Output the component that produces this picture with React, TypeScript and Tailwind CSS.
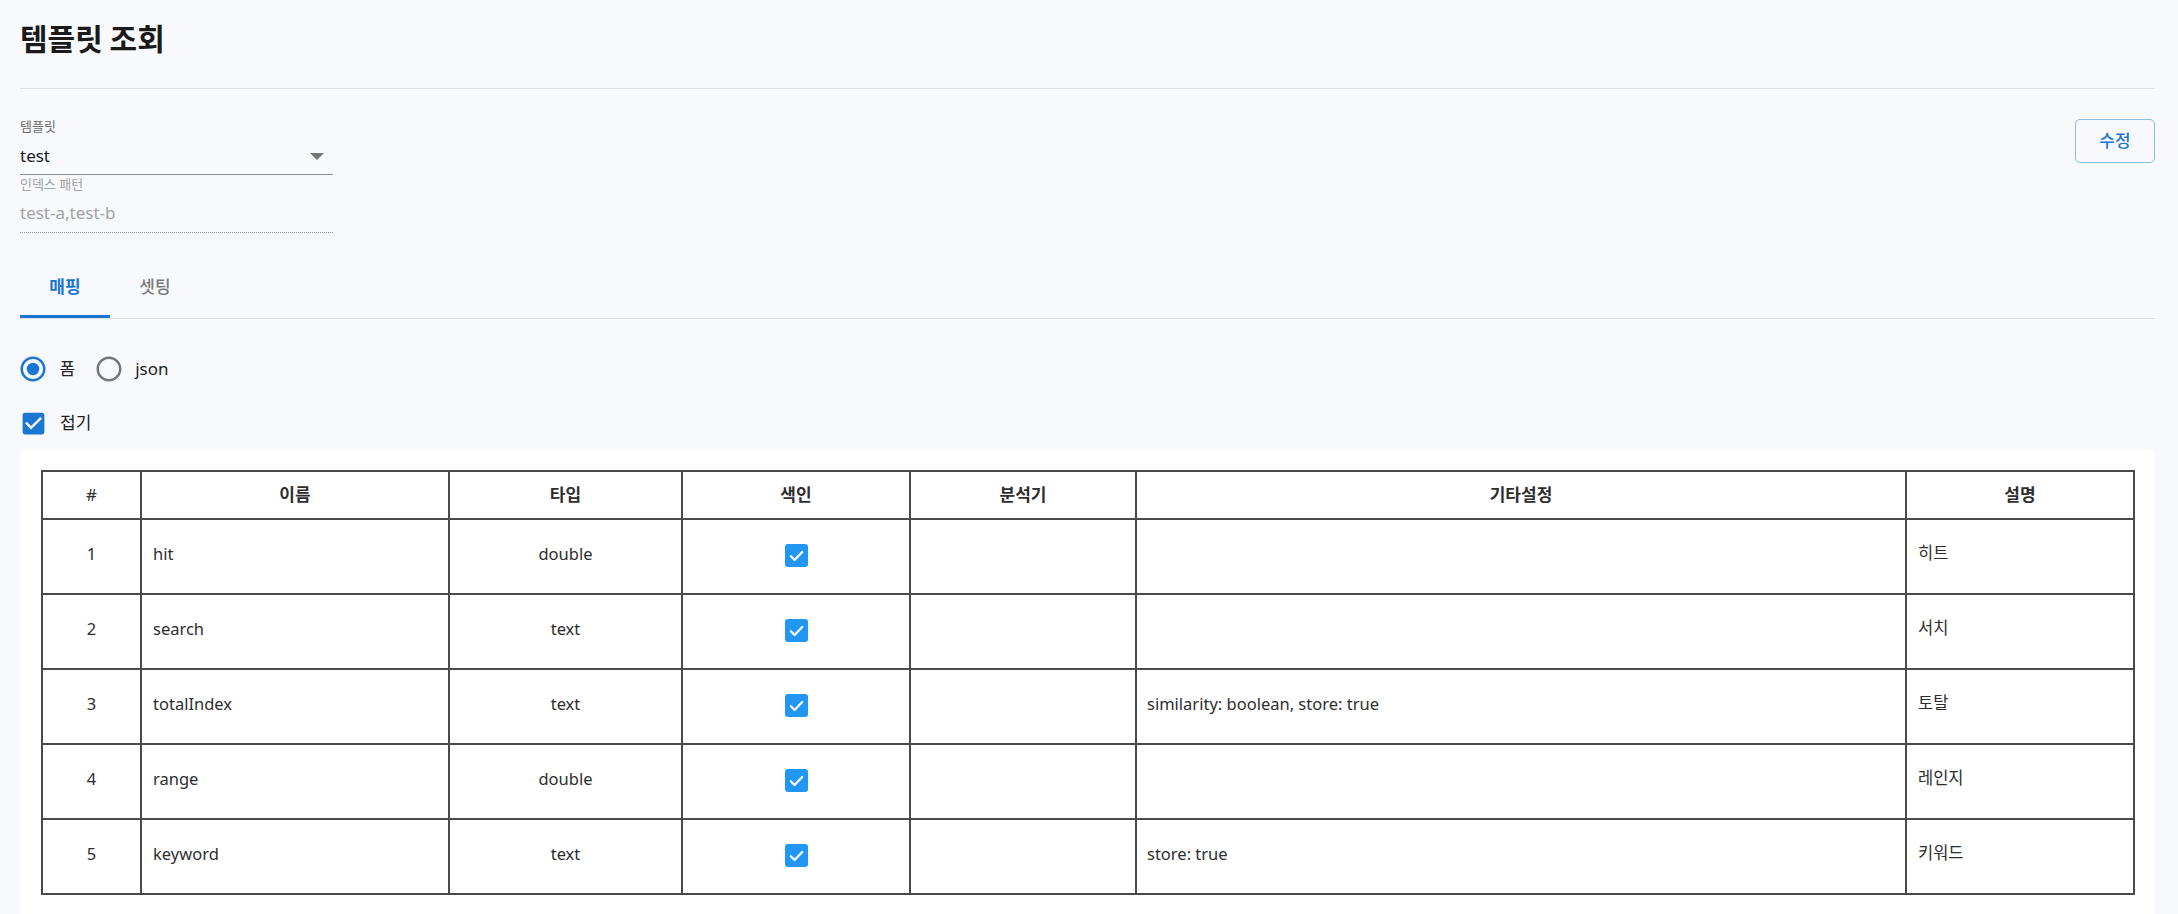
import React from "react";

const rows = [
  { n: 1, name: "hit", type: "double", etc: "", desc: "히트" },
  { n: 2, name: "search", type: "text", etc: "", desc: "서치" },
  { n: 3, name: "totalIndex", type: "text", etc: "similarity: boolean, store: true", desc: "토탈" },
  { n: 4, name: "range", type: "double", etc: "", desc: "레인지" },
  { n: 5, name: "keyword", type: "text", etc: "store: true", desc: "키워드" },
];

function TableCheck() {
  return (
    <div className="mx-auto flex h-[23px] w-[23px] items-center justify-center rounded-[3px] bg-[#2196f3]">
      <svg width="15" height="12" viewBox="0 0 15 12" fill="none">
        <path d="M1.8 6.2 L5.6 10 L13.2 2" stroke="#fff" strokeWidth="2.2" strokeLinecap="round" strokeLinejoin="round" />
      </svg>
    </div>
  );
}

export default function App() {
  const th = "border-2 border-[#4a4a4a] text-center text-[17px] font-bold h-[48px] p-0";
  const td = "border-2 border-[#4a4a4a] h-[75px] p-0 align-middle text-[16.5px]";
  return (
    <div className="min-h-screen bg-[#f7f9fc] pl-[20px] pr-[23px] font-['Noto_Sans','Noto_Sans_CJK_KR',sans-serif] text-[#212121]">
      {/* title */}
      <div className="h-[89px] border-b border-[#dfe0e2] pt-[17px]">
        <h1 className="font-['Noto_Sans_CJK_KR',sans-serif] text-[30px] font-bold leading-[40px] text-[#1a1a1a]">
          템플릿 조회
        </h1>
      </div>

      {/* form */}
      <div className="flex items-start justify-between pt-[29px]">
        <div className="w-[313px]">
          <div className="text-[13px] leading-[16px] text-[#6b6b6b]">템플릿</div>
          <div className="flex items-center justify-between border-b border-[#8f9093] pt-[10px] pb-[6px]">
            <span className="text-[17px] leading-[24px] text-[#1c1c1c]">test</span>
            <svg width="14" height="7" viewBox="0 0 14 7" className="mr-[9px]">
              <path d="M0 0 L14 0 L7 7 Z" fill="#757575" />
            </svg>
          </div>
          <div className="pt-[1px] text-[13px] leading-[16px] text-[#a3a3a3]">인덱스 패턴</div>
          <div className="border-b border-dotted border-[#8f9093] pt-[9px] pb-[7px]">
            <span className="text-[17px] leading-[24px] text-[#a3a3a3]">test-a,test-b</span>
          </div>
        </div>
        <button className="mt-[1px] h-[44px] w-[80px] rounded-[5px] border border-[#8dbbe9] text-[17px] font-medium text-[#1976d2]">
          수정
        </button>
      </div>

      {/* tabs */}
      <div className="mt-[25px] flex border-b border-[#dfe0e2]">
        <div className="flex h-[60px] w-[90px] flex-col">
          <div className="flex flex-1 items-center justify-center pt-[1px] text-[17px] font-semibold text-[#1976d2]">매핑</div>
          <div className="h-[3px] bg-[#1976d2]" />
        </div>
        <div className="flex h-[60px] w-[90px] flex-col">
          <div className="flex flex-1 items-center justify-center pt-[1px] text-[17px] font-medium text-[#7a7a7a]">셋팅</div>
          <div className="h-[3px]" />
        </div>
      </div>

      {/* radios */}
      <div className="mt-[35px] flex h-[30px] items-center">
        <svg width="30" height="30" viewBox="0 0 24 24" className="ml-[-2.5px]">
          <path
            fill="#1976d2"
            d="M12 2C6.48 2 2 6.48 2 12s4.48 10 10 10 10-4.48 10-10S17.52 2 12 2zm0 18c-4.42 0-8-3.58-8-8s3.58-8 8-8 8 3.58 8 8-3.58 8-8 8z"
          />
          <circle cx="12" cy="12" r="5" fill="#1976d2" />
        </svg>
        <span className="ml-[12px] text-[17px] text-[#222]">폼</span>
        <svg width="30" height="30" viewBox="0 0 24 24" className="ml-[19px]">
          <path
            fill="#757575"
            d="M12 2C6.48 2 2 6.48 2 12s4.48 10 10 10 10-4.48 10-10S17.52 2 12 2zm0 18c-4.42 0-8-3.58-8-8s3.58-8 8-8 8 3.58 8 8-3.58 8-8 8z"
          />
        </svg>
        <span className="ml-[11px] text-[17px] text-[#222]">json</span>
      </div>

      {/* checkbox */}
      <div className="mt-[24px] flex h-[30px] items-center">
        <svg width="29" height="29" viewBox="0 0 24 24" className="ml-[-1.5px]">
          <path
            fill="#1976d2"
            d="M19 3H5c-1.11 0-2 .9-2 2v14c0 1.1.89 2 2 2h14c1.11 0 2-.9 2-2V5c0-1.1-.89-2-2-2zm-9 14l-5-5 1.41-1.41L10 14.17l7.59-7.59L19 8l-9 9z"
          />
        </svg>
        <span className="ml-[12.5px] text-[17px] text-[#222]">접기</span>
      </div>

      {/* table card */}
      <div className="mt-[11px] rounded-t-[6px] bg-white px-[21px] pt-[21px] pb-[21px]">
        <table className="w-full table-fixed border-collapse text-[#2e2e2e]">
          <colgroup>
            <col className="w-[99px]" />
            <col className="w-[308px]" />
            <col className="w-[233px]" />
            <col className="w-[228px]" />
            <col className="w-[226px]" />
            <col className="w-[770px]" />
            <col className="w-[228px]" />
          </colgroup>
          <thead>
            <tr>
              <th className={`${th} font-normal`}>#</th>
              <th className={th}>이름</th>
              <th className={th}>타입</th>
              <th className={th}>색인</th>
              <th className={th}>분석기</th>
              <th className={th}>기타설정</th>
              <th className={th}>설명</th>
            </tr>
          </thead>
          <tbody>
            {rows.map((r) => (
              <tr key={r.n}>
                <td className={`${td} pb-[4px] text-center`}>{r.n}</td>
                <td className={`${td} px-[11px] pb-[4px]`}>{r.name}</td>
                <td className={`${td} pb-[4px] text-center`}>{r.type}</td>
                <td className={`${td} pb-[2px]`}>
                  <TableCheck />
                </td>
                <td className={td}></td>
                <td className={`${td} px-[10px] pb-[4px]`}>{r.etc}</td>
                <td className={`${td} px-[11px] pb-[6px]`}>{r.desc}</td>
              </tr>
            ))}
          </tbody>
        </table>
      </div>
    </div>
  );
}
